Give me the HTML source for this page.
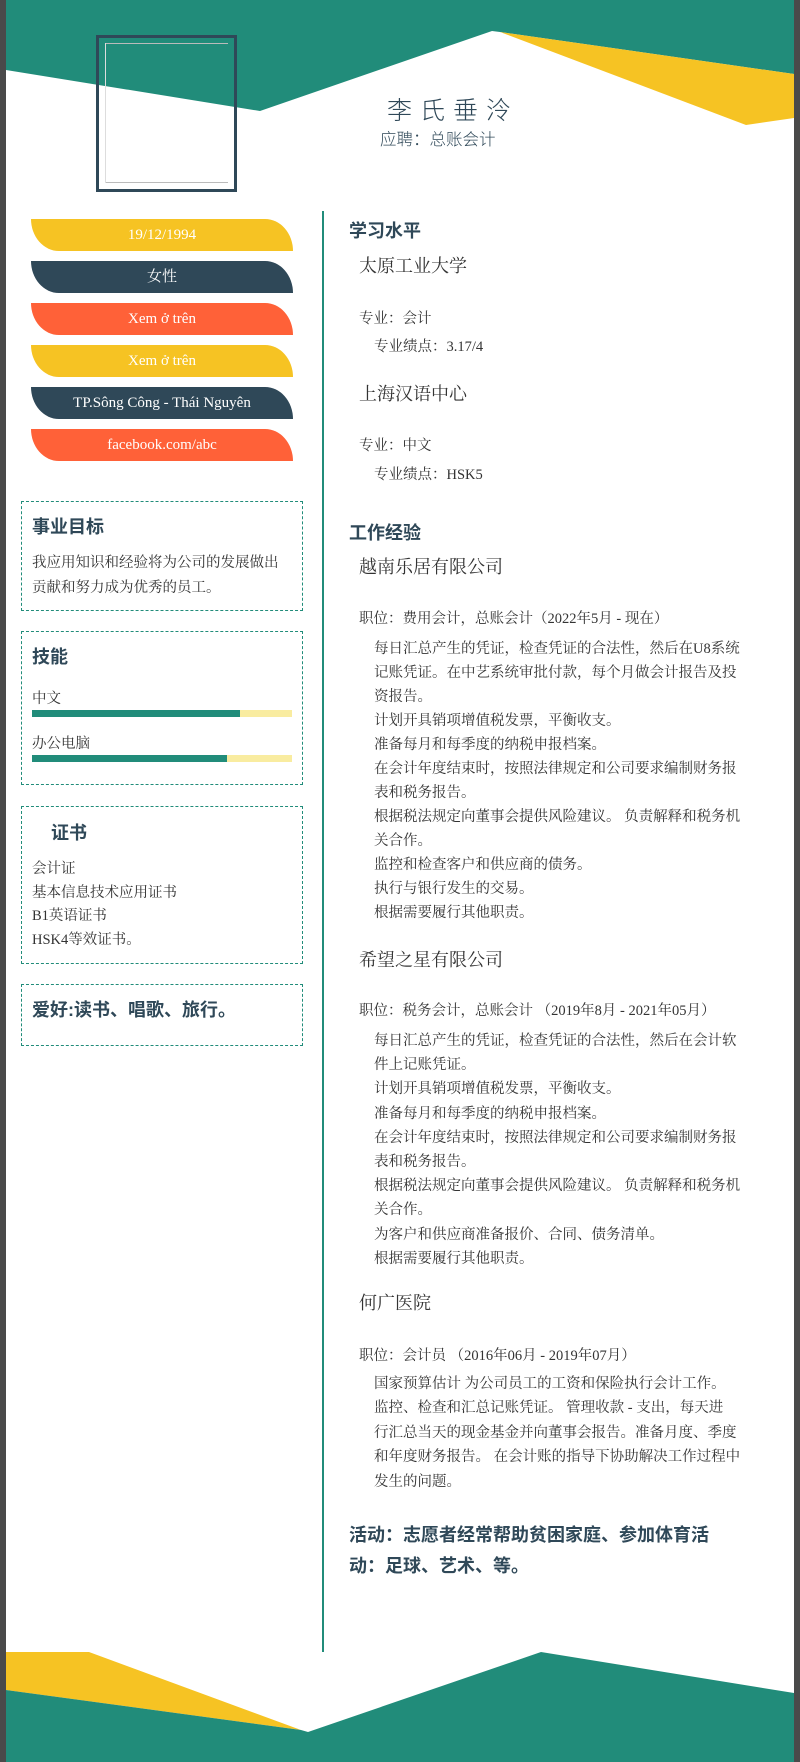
<!DOCTYPE html>
<html><head><meta charset="utf-8">
<style>
*{margin:0;padding:0;box-sizing:border-box}
body{width:800px;height:1762px;background:#4a4a4a;position:relative;overflow:hidden;font-family:"Liberation Serif","Noto Serif CJK SC",serif;color:#333}
#page{position:absolute;left:6px;top:0;width:788px;height:1762px;background:#fff}
.a{position:absolute;white-space:nowrap}
.pill{position:absolute;left:31px;width:262px;height:32px;border-radius:0 28px 0 28px/0 32px 0 32px;color:#fff;font-size:15px;text-align:center;line-height:32px}
.y{background:#f6c323}.d{background:#2f4858}.o{background:#ff6138}
.box{position:absolute;left:21px;width:282px;border:1px dashed #218c7a}
.h{font-family:"Liberation Sans","Noto Sans CJK SC",sans-serif;font-weight:bold;color:#2f4858;font-size:18px}
.t{font-size:14.5px;color:#333}
.co{font-size:18px;color:#333}
</style></head><body>
<div id="page"></div>
<svg class="a" style="left:0;top:0" width="800" height="1762">
<polygon points="6,0 794,0 794,74 500,32 492,31 260,111 6,70" fill="#218c7a"/>
<polygon points="500,32 794,74 794,118 746,125" fill="#f6c323"/>
<polygon points="6,1652 89,1652 301,1730 6,1690" fill="#f6c323"/>
<polygon points="6,1690 301,1730 308,1732 541,1652 794,1693 794,1762 6,1762" fill="#218c7a"/>
<rect x="322" y="211" width="2" height="1441" fill="#218c7a"/>
<rect x="97.5" y="36.5" width="138" height="154" fill="none" stroke="#2f4858" stroke-width="3"/>
<line x1="105" y1="43.5" x2="228" y2="43.5" stroke="#bbb"/>
<line x1="105" y1="182.5" x2="228" y2="182.5" stroke="#bbb"/>
<line x1="105.5" y1="43" x2="105.5" y2="183" stroke="#ddd"/>
</svg>
<div class="a" style="left:387px;top:92px;font-size:25px;letter-spacing:8px;color:#2f4858;font-family:'Noto Sans CJK SC',sans-serif;font-weight:300;line-height:34px">李氏垂泠</div>
<div class="a" style="left:380px;top:127px;font-size:16.5px;color:#2f4858;font-family:'Noto Sans CJK SC',sans-serif;font-weight:300;line-height:22px">应聘：总账会计</div>

<div class="pill y" style="top:219px">19/12/1994</div>
<div class="pill d" style="top:261px">女性</div>
<div class="pill o" style="top:303px">Xem ở trên</div>
<div class="pill y" style="top:345px">Xem ở trên</div>
<div class="pill d" style="top:387px">TP.Sông Công - Thái Nguyên</div>
<div class="pill o" style="top:429px">facebook.com/abc</div>

<div class="box" style="top:501px;height:110px"></div>
<div class="a h" style="left:32px;top:515px;line-height:24px">事业目标</div>
<div class="a t" style="left:32px;top:551px;line-height:24.5px">我应用知识和经验将为公司的发展做出<br>贡献和努力成为优秀的员工。</div>

<div class="box" style="top:631px;height:154px"></div>
<div class="a h" style="left:32px;top:645px;line-height:24px">技能</div>
<div class="a t" style="left:32px;top:688px;line-height:22px">中文</div>
<div class="a" style="left:32px;top:710px;width:260px;height:7px;background:#f9eca0"><div style="width:208px;height:7px;background:#218c7a"></div></div>
<div class="a t" style="left:32px;top:733px;line-height:22px">办公电脑</div>
<div class="a" style="left:32px;top:755px;width:260px;height:7px;background:#f9eca0"><div style="width:195px;height:7px;background:#218c7a"></div></div>

<div class="box" style="top:806px;height:158px"></div>
<div class="a h" style="left:51px;top:821px;line-height:24px">证书</div>
<div class="a t" style="left:32px;top:858px;line-height:23.7px">会计证<br>基本信息技术应用证书<br>B1英语证书<br>HSK4等效证书。</div>

<div class="box" style="top:984px;height:62px"></div>
<div class="a h" style="left:32px;top:998px;line-height:24px">爱好:读书、唱歌、旅行。</div>

<div class="a h" style="left:349px;top:219px;line-height:24px">学习水平</div>
<div class="a co" style="left:359px;top:254px;line-height:24px">太原工业大学</div>
<div class="a t" style="left:359px;top:308px;line-height:22px">专业：会计</div>
<div class="a t" style="left:374px;top:336px;line-height:22px">专业绩点：3.17/4</div>
<div class="a co" style="left:359px;top:382px;line-height:24px">上海汉语中心</div>
<div class="a t" style="left:359px;top:435px;line-height:22px">专业：中文</div>
<div class="a t" style="left:374px;top:464px;line-height:22px">专业绩点：HSK5</div>

<div class="a h" style="left:349px;top:521px;line-height:24px">工作经验</div>
<div class="a co" style="left:359px;top:555px;line-height:24px">越南乐居有限公司</div>
<div class="a t" style="left:359px;top:608px;line-height:22px">职位：费用会计，总账会计（2022年5月 - 现在）</div>
<div class="a t" style="left:374px;top:637px;line-height:24px">每日汇总产生的凭证，检查凭证的合法性，然后在U8系统<br>记账凭证。在中艺系统审批付款，每个月做会计报告及投<br>资报告。<br>计划开具销项增值税发票，平衡收支。<br>准备每月和每季度的纳税申报档案。<br>在会计年度结束时，按照法律规定和公司要求编制财务报<br>表和税务报告。<br>根据税法规定向董事会提供风险建议。 负责解释和税务机<br>关合作。<br>监控和检查客户和供应商的债务。<br>执行与银行发生的交易。<br>根据需要履行其他职责。</div>

<div class="a co" style="left:359px;top:948px;line-height:24px">希望之星有限公司</div>
<div class="a t" style="left:359px;top:1000px;line-height:22px">职位：税务会计，总账会计 （2019年8月 - 2021年05月）</div>
<div class="a t" style="left:374px;top:1029px;line-height:24.2px">每日汇总产生的凭证，检查凭证的合法性，然后在会计软<br>件上记账凭证。<br>计划开具销项增值税发票，平衡收支。<br>准备每月和每季度的纳税申报档案。<br>在会计年度结束时，按照法律规定和公司要求编制财务报<br>表和税务报告。<br>根据税法规定向董事会提供风险建议。 负责解释和税务机<br>关合作。<br>为客户和供应商准备报价、合同、债务清单。<br>根据需要履行其他职责。</div>

<div class="a co" style="left:359px;top:1291px;line-height:24px">何广医院</div>
<div class="a t" style="left:359px;top:1345px;line-height:22px">职位：会计员 （2016年06月 - 2019年07月）</div>
<div class="a t" style="left:374px;top:1372px;line-height:24.4px">国家预算估计 为公司员工的工资和保险执行会计工作。<br>监控、检查和汇总记账凭证。 管理收款 - 支出，每天进<br>行汇总当天的现金基金并向董事会报告。准备月度、季度<br>和年度财务报告。 在会计账的指导下协助解决工作过程中<br>发生的问题。</div>

<div class="a h" style="left:349px;top:1520px;line-height:31px">活动：志愿者经常帮助贫困家庭、参加体育活<br>动：足球、艺术、等。</div>
</body></html>
